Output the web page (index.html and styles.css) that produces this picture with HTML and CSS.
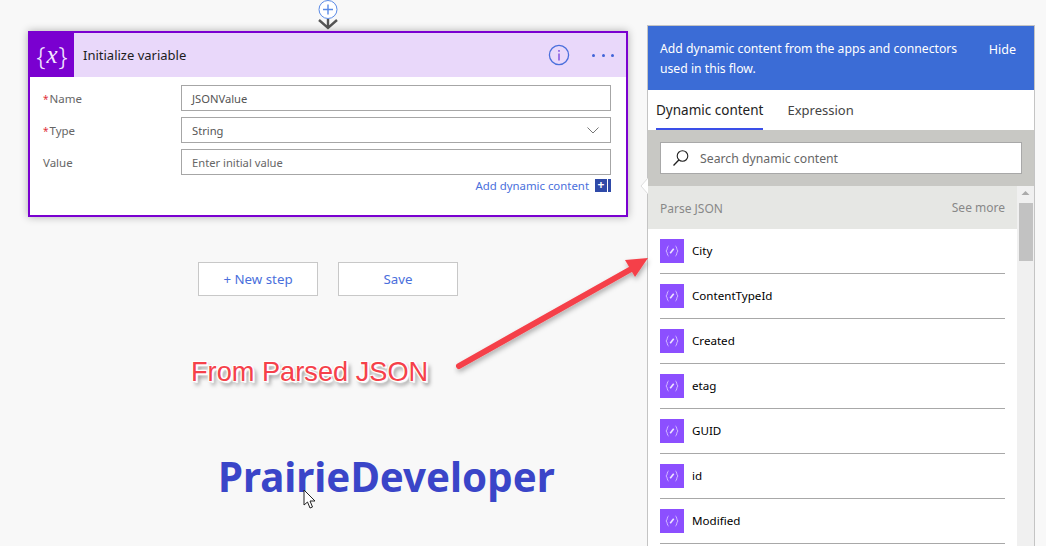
FILE: index.html
```html
<!DOCTYPE html>
<html>
	<head>
		<meta charset="UTF-8">
		<title>Initialize variable</title>
		<link rel="stylesheet" href="styles.css">
	</head>
	<body>
		<div class="canvas">
			<div class="connector">
				<svg width="24" height="31" viewBox="0 0 24 31">
					<circle cx="12" cy="9.5" r="9" fill="#fff" stroke="#5a8ae6" stroke-width="1"/>
					<path d="M12 4.5v10M7 9.5h10" stroke="#5a8ae6" stroke-width="1.4" fill="none"/>
					<path d="M3 20l9 8 9-8M12 19v9" stroke="#555" stroke-width="2.4" fill="none"/>
				</svg>
			</div>
			<div class="card">
				<div class="cardhead">
					<div class="cardicon">
						<span class="brace">{</span><span class="varx">x</span><span class="brace">}</span>
					</div>
					<div class="cardtitle">Initialize variable</div>
					<svg class="infoicon" width="22" height="22" viewBox="0 0 22 22">
						<circle cx="11" cy="11" r="9.6" fill="none" stroke="#4a6fdc" stroke-width="1.3"/>
						<rect x="10.2" y="9.5" width="1.6" height="7" fill="#8a5ae0"/>
						<rect x="10.2" y="6" width="1.6" height="1.8" fill="#8a5ae0"/>
					</svg>
					<div class="dots"><span></span><span></span><span></span></div>
				</div>
				<div class="cardbody">
					<div class="field">
						<label class="fieldlabel"><i>*</i>Name</label>
						<div class="fieldbox">JSONValue</div>
					</div>
					<div class="field">
						<label class="fieldlabel"><i>*</i>Type</label>
						<div class="fieldbox">String
							<svg class="chev" width="12" height="7" viewBox="0 0 12 7"><path d="M.5.5L6 6 11.500.5" fill="none" stroke="#777" stroke-width="1"/></svg>
						</div>
					</div>
					<div class="field">
						<label class="fieldlabel">Value</label>
						<div class="fieldbox placeholder">Enter initial value</div>
					</div>
					<div class="addrow">
						<a class="addlink">Add dynamic content</a>
						<span class="addbtn">+</span>
					</div>
				</div>
			</div>
			<div class="actions">
				<button class="actionbtn">+ New step</button>
				<button class="actionbtn">Save</button>
			</div>
		</div>

		<div class="panel">
			<div class="panelhead">
				<p>Add dynamic content from the apps and connectors used in this flow.</p>
				<span class="hide">Hide</span>
			</div>
			<div class="tabs">
				<span class="tab current">Dynamic content</span>
				<span class="tab">Expression</span>
			</div>
			<div class="searchband">
				<div class="searchbox">
					<svg width="18" height="18" viewBox="0 0 18 18"><circle cx="10.5" cy="7" r="5.3" fill="none" stroke="#222" stroke-width="1.1"/><path d="M6.8 11L1.5 16.5" stroke="#222" stroke-width="1.3"/></svg>
					<span>Search dynamic content</span>
				</div>
			</div>
			<div class="listwrap">
				<div class="list">
					<div class="grouphead"><span class="groupname">Parse JSON</span><span class="seemore">See more</span></div>
					<div class="row"><span class="tokenicon"><svg width="14" height="12" viewBox="0 0 14 12"><use href="#token"/></svg></span><span class="rowname">City</span></div>
					<div class="row"><span class="tokenicon"><svg width="14" height="12" viewBox="0 0 14 12"><use href="#token"/></svg></span><span class="rowname">ContentTypeId</span></div>
					<div class="row"><span class="tokenicon"><svg width="14" height="12" viewBox="0 0 14 12"><use href="#token"/></svg></span><span class="rowname">Created</span></div>
					<div class="row"><span class="tokenicon"><svg width="14" height="12" viewBox="0 0 14 12"><use href="#token"/></svg></span><span class="rowname">etag</span></div>
					<div class="row"><span class="tokenicon"><svg width="14" height="12" viewBox="0 0 14 12"><use href="#token"/></svg></span><span class="rowname">GUID</span></div>
					<div class="row"><span class="tokenicon"><svg width="14" height="12" viewBox="0 0 14 12"><use href="#token"/></svg></span><span class="rowname">id</span></div>
					<div class="row"><span class="tokenicon"><svg width="14" height="12" viewBox="0 0 14 12"><use href="#token"/></svg></span><span class="rowname">Modified</span></div>
				</div>
				<div class="scrollbar">
					<svg width="17" height="14" viewBox="0 0 17 14"><path d="M4.500 9l4-4 4 4z" fill="#aaa"/></svg>
					<div class="thumb"></div>
				</div>
			</div>
		</div>
		<svg class="caret" width="8" height="16" viewBox="0 0 8 16"><path d="M8 0L1 8l7 8z" fill="#fff"/><path d="M8 0L1 8l7 8" fill="none" stroke="#ddd"/></svg>

		<!-- annotations drawn on top of the screenshot -->
		<svg class="arrow" width="210" height="130" viewBox="0 0 210 130">
			<defs>
				<filter id="soft" x="-20%" y="-20%" width="150%" height="150%"><feDropShadow dx="1" dy="3" stdDeviation="2.5" flood-color="#000" flood-opacity=".3"/></filter>
				<symbol id="token" viewBox="0 0 14 12">
					<path d="M3.600 1C2 1 2.600 5.200 1 6c1.600.8 1 5 2.600 5M10.400 1c1.600 0 1 4.200 2.600 5-1.600.8-1 5-2.600 5" fill="none" stroke="#d9c4ff" stroke-width=".9"/>
					<path d="M5.200 8.200L8.700 3.800" stroke="#efe6ff" stroke-width="1.600"/>
				</symbol>
			</defs>
			<g filter="url(#soft)">
				<path d="M6 111L180 13" stroke="#f5414a" stroke-width="6" stroke-linecap="round"/>
				<path d="M195 3L172 5l10 17z" fill="#f5414a"/>
			</g>
		</svg>
		<div class="note">From Parsed JSON</div>
		<div class="mark">PrairieDeveloper</div>
		<svg class="pointer" width="13" height="20" viewBox="0 0 13 20"><path d="M1 1v15l3.500-3 2.500 6 2.500-1-2.500-6h5z" fill="#fff" stroke="#222" stroke-width="1"/></svg>
	</body>
</html>
```
FILE: styles.css
```css
html,body{margin:0;padding:0;height:100%;}
body{
	display:flex;
	align-items:flex-start;
	height:546px;
	overflow:hidden;
	position:relative;
	background-color:#f8f8f8;
	font-family:"Noto Sans","Open Sans",sans-serif;
	font-size:12px;
	color:#333;
}

.canvas{
	width:647px;
	padding-left:9px;
	box-sizing:border-box;
	display:flex;
	flex-direction:column;
	align-items:center;
	flex:none;
}
.connector{height:31px;}
.connector svg{display:block;}

.card{
	width:600px;
	height:186px;
	box-sizing:border-box;
	border:2px solid #7a00d0;
	background-color:#fff;
	box-shadow:0 0 8px rgba(0,0,0,.3);
}
.cardhead{
	height:44px;
	display:flex;
	align-items:center;
	background-color:#e9d8fa;
}
.cardicon{
	width:44px;
	height:44px;
	background-color:#7a00d0;
	color:#f3e8ff;
	display:flex;
	align-items:center;
	justify-content:center;
	font-family:"Liberation Serif",serif;
}
.brace{font-size:25px;font-family:"Noto Sans",sans-serif;font-weight:300;line-height:30px;}
.varx{font-size:25px;font-style:italic;margin:0 1px;line-height:24px;}
.cardtitle{margin-left:9px;flex:1;font-size:13px;color:#1c1c1c;}
.infoicon{margin-right:22px;}
.dots{display:flex;gap:6.500px;margin-right:12px;}
.dots span{width:3px;height:3px;border-radius:50%;background-color:#3f63d8;}

.cardbody{padding:8px 15px 0 13px;}
.field{display:flex;align-items:center;height:26px;margin-bottom:6px;}
.fieldlabel{width:138px;flex:none;color:#666;font-size:11.500px;}
.fieldlabel i{color:#e0303a;font-style:normal;font-size:10px;margin-right:1px;}
.fieldbox{
	flex:1;
	height:26px;
	line-height:25px;
	box-sizing:border-box;
	border:1px solid #a6a6a6;
	padding-left:10px;
	color:#555;
	font-size:11.200px;
	display:flex;
	align-items:center;
	justify-content:space-between;
}
.fieldbox.placeholder{color:#666;}
.chev{margin-right:11px;}
.addrow{
	display:flex;
	justify-content:flex-end;
	align-items:center;
	margin-top:-4px;
	height:17px;
}
.addlink{color:#4a6fdc;margin-right:6px;font-size:11.400px;}
.addbtn{
	width:16px;
	height:13px;
	box-sizing:border-box;
	padding-right:4px;
	background:linear-gradient(to right,#2f4aa8 12px,#fff 12px,#fff 13px,#2f4aa8 13px);
	color:#fff;
	font-size:12px;
	font-weight:bold;
	line-height:12px;
	text-align:center;
}

.actions{display:flex;gap:20px;margin-top:45px;}
.actionbtn{
	width:120px;
	height:34px;
	border:1px solid #c8c8c8;
	background-color:#fff;
	color:#4a6fdc;
	font-family:inherit;
	font-size:13.300px;
	padding:0;
}

.panel{
	width:388px;
	height:521px;
	margin-top:25px;
	flex:none;
	box-sizing:border-box;
	border:1px solid #c4c4c4;
	border-bottom:0;
	background-color:#fff;
	display:flex;
	flex-direction:column;
}
.panelhead{
	height:64px;
	flex:none;
	box-sizing:border-box;
	background-color:#3b6cd6;
	color:#fff;
	display:flex;
	padding:13px 18px 0 12px;
	font-size:12.200px;
	line-height:20px;
}
.panelhead p{margin:0;width:312px;}
.hide{margin-left:auto;line-height:21px;font-size:12.500px;}
.tabs{height:40px;flex:none;display:flex;padding-left:8px;gap:24px;box-sizing:border-box;}
.tab{font-size:13px;line-height:40px;height:40px;box-sizing:border-box;color:#444;}
.tab.current{font-size:13.500px;color:#222;border-bottom:2px solid #3a4fe8;}
.searchband{
	height:56px;
	flex:none;
	box-sizing:border-box;
	background-color:#c8c8c4;
	padding:12px 12px 0;
}
.searchbox{
	height:32px;
	box-sizing:border-box;
	border:1px solid #a8a8a8;
	background-color:#fff;
	display:flex;
	align-items:center;
	padding-left:11px;
	gap:10px;
	color:#666;
	font-size:12.250px;
}
.listwrap{flex:1;display:flex;min-height:0;overflow:hidden;}
.list{flex:1;}
.grouphead{
	height:43px;
	background-color:#e6e7e4;
	display:flex;
	align-items:center;
	justify-content:space-between;
	padding:0 12px;
	color:#888;
}
.groupname{margin-top:2px;}
.row{
	height:45px;
	margin:0 12px;
	box-sizing:border-box;
	border-bottom:1px solid #a8a8a8;
	display:flex;
	align-items:center;
	gap:8px;
	padding-bottom:1px;
	color:#000;
	font-size:11.600px;
}
.tokenicon{
	width:24px;
	height:24px;
	background-color:#8c4fff;
	display:flex;
	align-items:center;
	justify-content:center;
}
.scrollbar{width:17px;flex:none;background-color:#f0f0f0;}
.scrollbar svg{display:block;}
.thumb{height:58px;margin:3px 1px 0 2px;background-color:#c2c2c2;}

.caret{position:absolute;left:640px;top:178px;}

.arrow{position:absolute;left:453px;top:255px;}
.note{
	position:absolute;
	left:191px;
	top:354px;
	font-family:"Liberation Sans",sans-serif;
	font-size:27.200px;
	line-height:36px;
	color:#f5414a;
	white-space:nowrap;
	text-shadow:0 0 2px #fff,1px 1px 1px #fff,-1px -1px 1px #fff,1px -1px 1px #fff,-1px 1px 1px #fff,2px 2px 1px #fff,3px 4px 4px rgba(0,0,0,.55);
}
.mark{
	position:absolute;
	left:218px;
	top:450px;
	font-family:"Noto Sans",sans-serif;
	font-weight:bold;
	font-size:40.250px;
	line-height:54px;
	color:#3a45c8;
	white-space:nowrap;
}
.pointer{position:absolute;left:303px;top:489px;}
```
